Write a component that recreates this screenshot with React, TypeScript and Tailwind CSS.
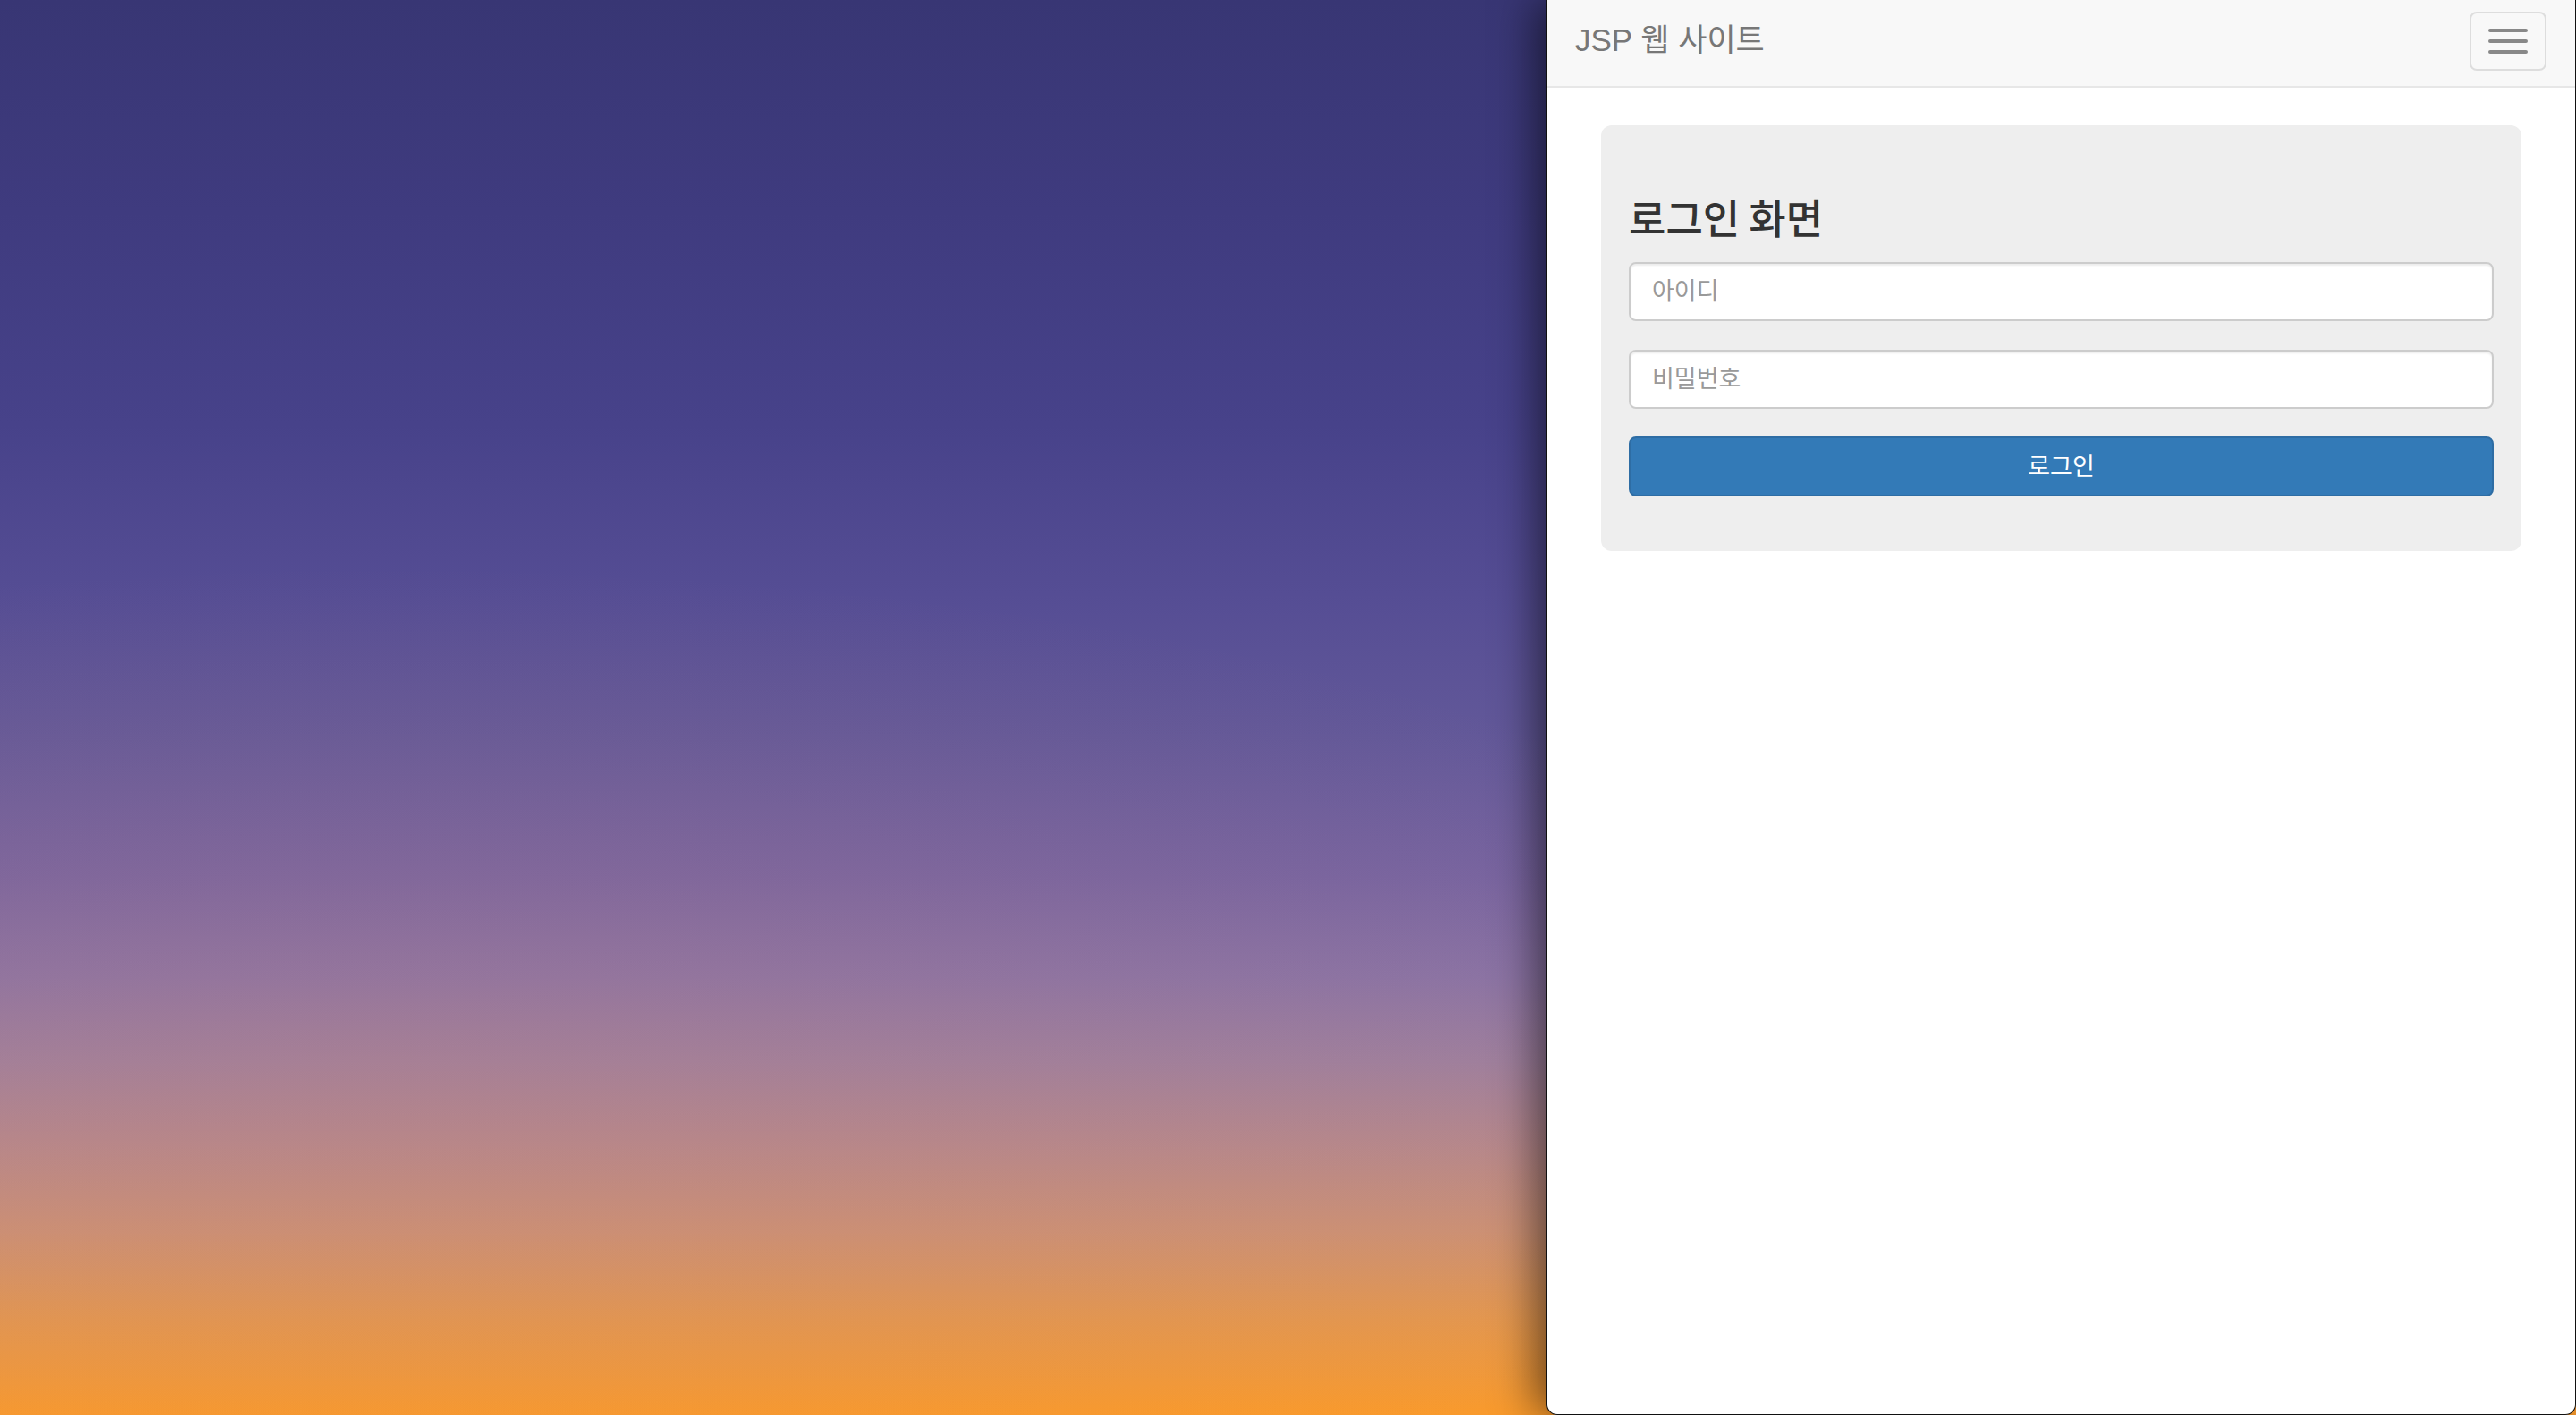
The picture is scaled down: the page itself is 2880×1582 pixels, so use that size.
import React from "react";

export default function App() {
  return (
    <div className="relative flex h-[1582px] w-[2880px] overflow-hidden bg-[radial-gradient(ellipse_60%_35%_at_15%_75%,rgba(200,130,120,0.25),transparent),linear-gradient(180deg,#383674_0%,#3f3b7f_15%,#47428a_30%,#554d94_42%,#625899_52%,#7563a1_62%,#8772a6_69%,#9c7f9f_75%,#b5888c_81%,#cc9174_87%,#e3974f_93%,#f99a2c_100%)]">
      <div className="flex-1" />
      <div className="relative flex h-[1582px] w-[1151px] flex-col overflow-hidden rounded-b-[12px] border border-t-0 border-[#111] bg-white shadow-[-12px_0_48px_rgba(0,0,0,0.55)]">
        {/* Navbar */}
        <nav className="flex h-[98px] shrink-0 items-start justify-between border-b-2 border-[#e7e7e7] bg-[#f8f8f8] pl-[31px] pr-[32px]">
          <a className="mt-[27px] block font-['Liberation_Sans','Noto_Sans_CJK_KR',sans-serif] text-[35px] leading-[36px] text-[#777]">
            JSP 웹 사이트
          </a>
          <button className="mt-[13px] flex h-[66px] w-[86px] flex-col items-center justify-center gap-[8px] rounded-[8px] border-2 border-[#ddd] bg-transparent">
            <span className="block h-[4px] w-[44px] rounded-[2px] bg-[#888]" />
            <span className="block h-[4px] w-[44px] rounded-[2px] bg-[#888]" />
            <span className="block h-[4px] w-[44px] rounded-[2px] bg-[#888]" />
          </button>
        </nav>

        {/* Content */}
        <div className="px-[60px] pt-[42px]">
          <div className="rounded-[12px] bg-[#eeeeee] px-[31px] pb-[61px] pt-[78px]">
            <form className="flex flex-col" onSubmit={(e) => e.preventDefault()}>
              <h3 className="mb-[25px] font-['Noto_Sans_CJK_KR',sans-serif] text-[45px] font-medium leading-[50px] text-[#333]">
                로그인 화면
              </h3>
              <input
                type="text"
                placeholder="아이디"
                className="h-[66px] w-full rounded-[8px] border-2 border-[#ccc] bg-white px-[24px] pb-[5px] font-['Noto_Sans_CJK_KR',sans-serif] text-[27px] text-[#555] shadow-[inset_0_2px_2px_rgba(0,0,0,0.075)] outline-none placeholder:text-[#999]"
              />
              <input
                type="password"
                placeholder="비밀번호"
                className="mt-[32px] h-[66px] w-full rounded-[8px] border-2 border-[#ccc] bg-white px-[24px] pb-[5px] font-['Noto_Sans_CJK_KR',sans-serif] text-[27px] text-[#555] shadow-[inset_0_2px_2px_rgba(0,0,0,0.075)] outline-none placeholder:text-[#999]"
              />
              <button
                type="submit"
                className="mt-[31px] h-[67px] w-full rounded-[8px] border-2 border-[#2e6da4] bg-[#337ab7] pb-[3px] font-['Noto_Sans_CJK_KR',sans-serif] text-[27px] text-white"
              >
                로그인
              </button>
            </form>
          </div>
        </div>
      </div>
    </div>
  );
}
